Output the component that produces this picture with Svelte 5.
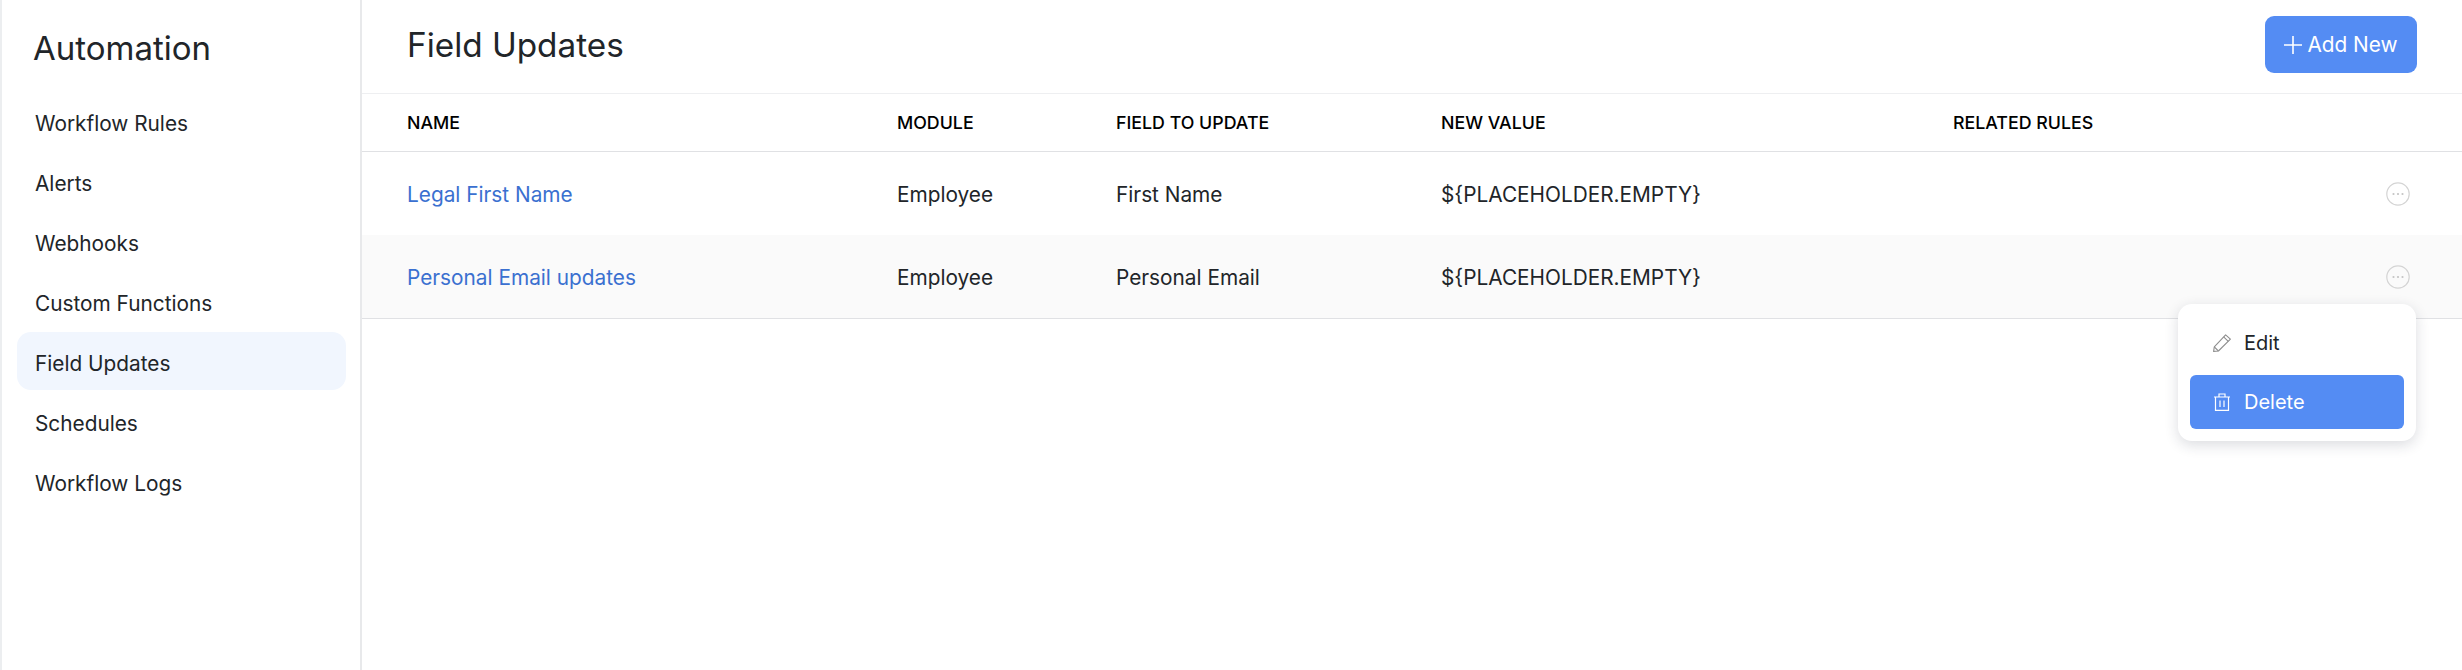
<script>
  const menu = ['Workflow Rules', 'Alerts', 'Webhooks', 'Custom Functions', 'Field Updates', 'Schedules', 'Workflow Logs'];
  const active = 'Field Updates';
  const columns = ['Name', 'Module', 'Field to update', 'New value', 'Related rules'];
  const rows = [
    { name: 'Legal First Name', module: 'Employee', field: 'First Name', value: '${PLACEHOLDER.EMPTY}' },
    { name: 'Personal Email updates', module: 'Employee', field: 'Personal Email', value: '${PLACEHOLDER.EMPTY}' }
  ];
</script>

<div class="page">
  <aside class="sidebar">
    <h2>Automation</h2>
    <nav>
      {#each menu as item}
        <div class="item" class:active={item === active}>{item}</div>
      {/each}
    </nav>
  </aside>

  <main>
    <header>
      <h1>Field Updates</h1>
      <button class="add">
        <svg width="18" height="18" viewBox="0 0 18 18" fill="none" stroke="currentColor" stroke-width="1.6"><path d="M9 0v18M0 9h18" /></svg>
        Add New
      </button>
    </header>

    <div class="row head">
      {#each columns as col}
        <div>{col}</div>
      {/each}
    </div>

    {#each rows as row, i}
      <div class="row body" class:hover={i === 1}>
        <div class="link">{row.name}</div>
        <div>{row.module}</div>
        <div>{row.field}</div>
        <div>{row.value}</div>
        <div></div>
        <svg class="more" width="24" height="24" viewBox="0 0 24 24" fill="none">
          <circle cx="12" cy="12" r="11.2" stroke="#d4d4d4" stroke-width="1.2" />
          <circle cx="7.5" cy="12" r="1.1" fill="#c4c4c4" />
          <circle cx="12" cy="12" r="1.1" fill="#c4c4c4" />
          <circle cx="16.5" cy="12" r="1.1" fill="#c4c4c4" />
        </svg>
      </div>
    {/each}

    <div class="popup">
      <div class="action edit">
        <svg width="18" height="18" viewBox="0 0 18 18" fill="none" stroke="#8e8e8e" stroke-width="1.1" stroke-linejoin="round"><path d="M.6 17.4l.7-4.6L12.6.8l4.8 4.3L5.4 17z" /><path d="M1.3 12.8l4.1 4.2M10.6 2.9l4.7 4.4" /></svg>
        Edit
      </div>
      <div class="action selected">
        <svg width="18" height="18" viewBox="0 0 18 18" fill="none" stroke="#fff" stroke-width="1.2"><path d="M1 4h16M2.5 4v13.4h13V4M6 4V1h6v3M7 7.5v6.5M11 7.5v6.5" /></svg>
        Delete
      </div>
    </div>
  </main>
</div>

<style>
  :global(body) {
    margin: 0;
    background: #fff;
  }

  .page {
    display: flex;
    height: 670px;
    font-family: Inter, "Noto Sans", sans-serif;
    color: #212529;
    font-size: 20.8px;
  }

  .sidebar {
    width: 362px;
    box-sizing: border-box;
    flex: none;
    border-left: 2px solid #eceef0;
    border-right: 2px solid #e8e9eb;
    padding-left: 15px;
  }

  .sidebar h2 {
    margin: 0;
    padding: 28px 0 0 16px;
    height: 92px;
    box-sizing: border-box;
    font-size: 33px;
    font-weight: 400;
    line-height: 40px;
  }

  nav {
    width: 329px;
    display: flex;
    flex-direction: column;
    gap: 2px;
  }

  .item {
    height: 58px;
    box-sizing: border-box;
    padding: 3px 0 0 18px;
    line-height: 58px;
    border-radius: 14px;
  }

  .item.active {
    background: #f1f6fe;
  }

  main {
    flex: 1;
    position: relative;
    min-width: 0;
  }

  header {
    height: 77px;
    display: flex;
    align-items: flex-start;
    justify-content: space-between;
    padding: 16px 45px 0;
    border-bottom: 1px solid #eeeff1;
  }

  h1 {
    margin: 0;
    font-size: 33.3px;
    font-weight: 400;
    line-height: 59px;
  }

  .add {
    width: 152px;
    height: 57px;
    display: flex;
    align-items: center;
    justify-content: center;
    gap: 5px;
    padding: 0;
    border: none;
    border-radius: 9px;
    background: #548cf3;
    color: #fff;
    font: inherit;
  }

  .row {
    display: grid;
    grid-template-columns: 490px 219px 325px 512px 1fr;
    align-items: center;
    padding-left: 45px;
    position: relative;
  }

  .head {
    height: 57px;
    border-bottom: 1px solid #e0e1e4;
    font-size: 17.8px;
    font-weight: 500;
    color: #000;
    text-transform: uppercase;
  }

  .body {
    height: 83px;
    box-sizing: border-box;
    padding-top: 2px;
  }

  .hover {
    height: 84px;
    background: #fafafa;
    border-bottom: 1px solid #e0e1e4;
  }

  .link {
    color: #3a70d0;
  }

  .more {
    position: absolute;
    right: 52px;
    top: 30px;
  }

  .popup {
    position: absolute;
    top: 304px;
    right: 46px;
    width: 238px;
    height: 137px;
    box-sizing: border-box;
    padding: 12px;
    background: #fff;
    border-radius: 14px;
    box-shadow: 0 4px 14px rgba(30, 40, 60, 0.16);
    display: flex;
    flex-direction: column;
    justify-content: flex-end;
    gap: 2px;
    font-size: 20px;
  }

  .action {
    height: 55px;
    display: flex;
    align-items: center;
    gap: 13px;
    padding-left: 23px;
    border-radius: 6px;
  }

  .action.edit {
    margin-bottom: 2px;
  }

  .action.selected {
    background: #548cf3;
    color: #fff;
  }
</style>
